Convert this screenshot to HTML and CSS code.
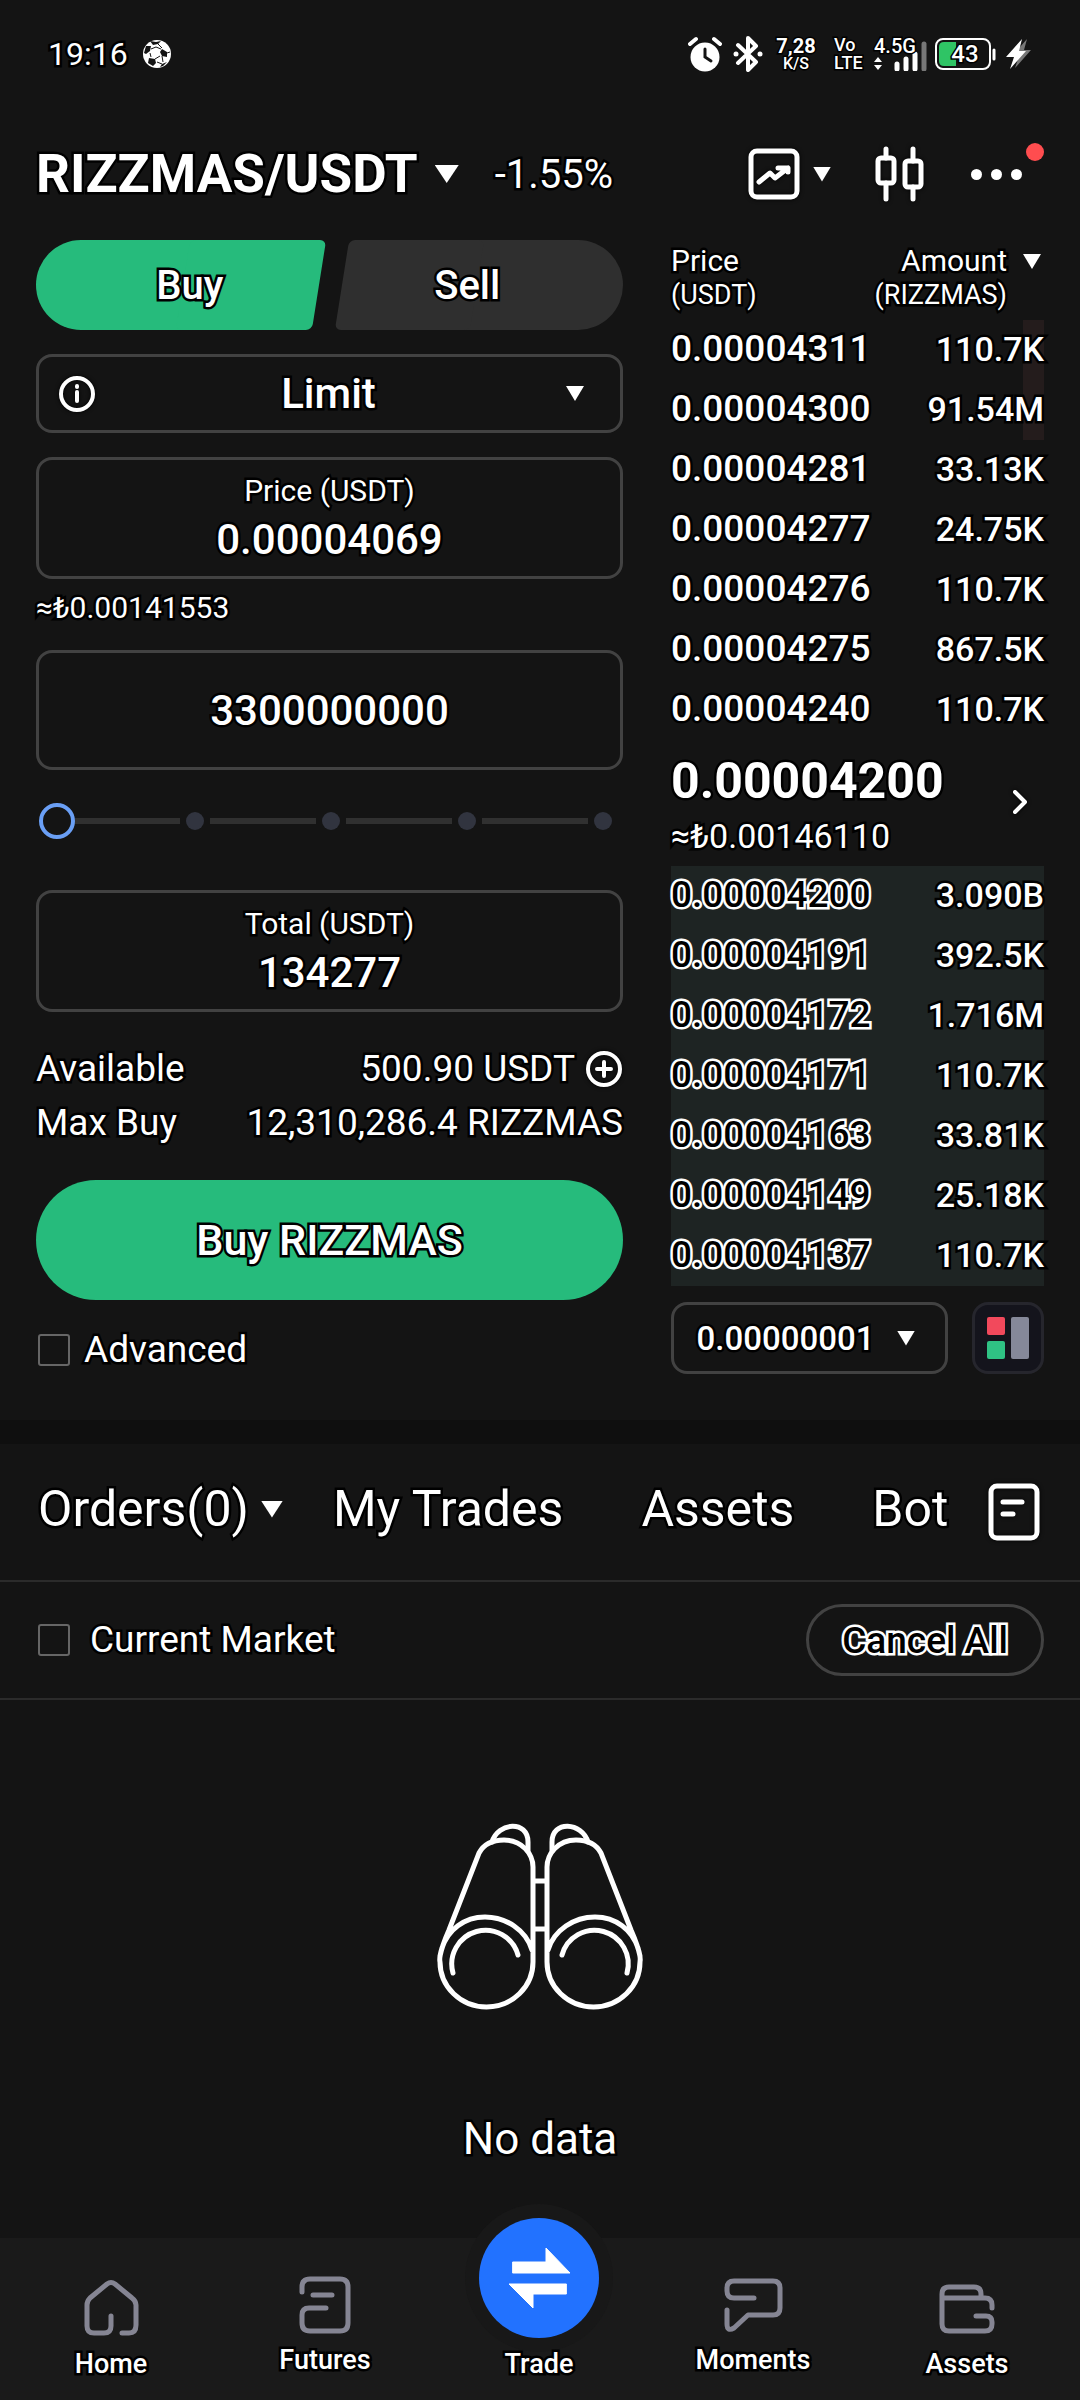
FILE: index.html
```html
<!DOCTYPE html>
<html lang="en">
<head>
<meta charset="utf-8">
<meta name="viewport" content="width=device-width, initial-scale=1">
<title>RIZZMAS/USDT</title>
<link rel="stylesheet" href="styles.css">
</head>
<body>
<div class="app">
  <div class="status">
    <span class="status-time">19:16</span>
    <svg class="ball" viewBox="0 0 28 28" aria-hidden="true">
      <circle cx="14" cy="14" r="14" fill="#fff"/>
      <path d="M7 1l6 1 5-1-3 3-5 1zM19 9l5 3 0 5-5-1-2-4zM3 6l5 0-1 5-4 3-2-1zM6 18l6 1 1 4-3 3-5-3zM19 24l5-2-4 4-3 1z" fill="#141414"/>
      <path d="M8 9l5-2 5 2M7 13l1 4M12 19l5-3M19 16l1 6M14 22l5 2M15 4l4 4M24 13l3-1" stroke="#141414" fill="none"/>
    </svg>
    <div class="status-icons">
      <svg class="alarm" viewBox="0 0 34 36" aria-hidden="true">
        <circle cx="17" cy="21" r="14.500" fill="#fff"/>
        <path d="M2 8l6-5M32 8l-6-5" stroke="#fff" stroke-width="4" stroke-linecap="round"/>
        <path d="M17 13v8l6 4" stroke="#141414" stroke-width="3" fill="none" stroke-linecap="round"/>
      </svg>
      <svg class="bluetooth" viewBox="0 0 36 36" aria-hidden="true">
        <path d="M8 9l18 17-8 8V2l8 8L8 27" fill="none" stroke="#fff" stroke-width="4" stroke-linejoin="round" stroke-linecap="round"/>
        <circle cx="6" cy="18" r="2.500" fill="#fff"/><circle cx="30" cy="18" r="2.500" fill="#fff"/>
      </svg>
      <div class="speed"><b>7,28</b><small>K/S</small></div>
      <div class="volte"><span>Vo</span><span>LTE</span></div>
      <div class="signal">
        <svg viewBox="0 0 54 34" aria-hidden="true">
          <path d="M0 25l4-5 4 5zM0 28l4 5 4-5z" fill="#fff"/>
          <path d="M23 27v5M32 22v10M41 17v15" stroke="#fff" stroke-width="5" stroke-linecap="round"/>
          <path d="M50 7v25" stroke="#777" stroke-width="5" stroke-linecap="round"/>
        </svg>
        <span>4.5G</span>
      </div>
      <div class="battery">
        <svg viewBox="0 0 62 34" aria-hidden="true">
          <path d="M10 5h12v24H10q-5 0-5-5V10q0-5 5-5z" fill="#2fc465"/>
          <rect x="2" y="2" width="54" height="30" rx="7" fill="none" stroke="#fff" stroke-width="2"/>
          <path d="M60 13v9" stroke="#fff" stroke-width="3" stroke-linecap="round"/>
        </svg>
        <span>43</span>
      </div>
      <svg class="bolt" viewBox="0 0 28 34" aria-hidden="true">
        <path d="M23 2L8 19h7l-4 12 16-18h-7z" fill="#777"/>
        <path d="M18 2L2 20h8L6 32l16-18h-7z" fill="#fff"/>
      </svg>
    </div>
  </div>

  <header class="header">
    <button class="pair" type="button"><h1>RIZZMAS/USDT</h1><i class="caret caret-lg"></i></button>
    <span class="change">-1.55%</span>
    <div class="tools">
      <button class="tool tool-chart" type="button" aria-label="Chart type">
        <svg class="icon" width="52" height="52" viewBox="0 0 52 52" aria-hidden="true">
          <rect x="3" y="3" width="46" height="46" rx="6"/>
          <path d="M11 34l11-9 5 5 13-10M30 20h10v4"/>
        </svg>
        <i class="caret"></i>
      </button>
      <button class="tool" type="button" aria-label="Candles">
        <svg class="icon" width="50" height="56" viewBox="0 0 50 56" aria-hidden="true">
          <rect x="4" y="12" width="16" height="25" rx="3"/><path d="M12 3v9M12 37v16"/>
          <rect x="31" y="15" width="16" height="26" rx="3"/><path d="M39 3v12M39 41v12"/>
        </svg>
      </button>
      <button class="tool more" type="button" aria-label="More"><i></i><i></i><i></i><b class="badge"></b></button>
    </div>
  </header>

  <main class="trade">
    <form class="form">
      <div class="sides">
        <button class="side side-buy" type="button">Buy</button>
        <button class="side side-sell" type="button">Sell</button>
      </div>
      <div class="box box-select">
        <svg class="icon icon-thin" width="40" height="40" viewBox="0 0 40 40" aria-hidden="true"><circle cx="20" cy="20" r="16"/><path d="M20 18v9"/><path d="M20 12v1"/></svg>
        <select aria-label="Order type"><option>Limit</option></select>
        <i class="caret"></i>
      </div>
      <div class="box box-field">
        <label for="price">Price (USDT)</label>
        <input id="price" type="text" value="0.00004069">
      </div>
      <p class="approx">≈₺0.00141553</p>
      <div class="box box-amount"><input type="text" aria-label="Amount" value="3300000000"></div>
      <div class="slider">
        <div class="stops"><i></i><b></b><i></i><b></b><i></i><b></b><i></i><b></b></div>
        <input type="range" min="0" max="100" value="0" aria-label="Percent of balance">
      </div>
      <div class="box box-field">
        <label for="total">Total (USDT)</label>
        <input id="total" type="text" value="134277">
      </div>
      <dl class="balance">
        <div><dt>Available</dt><dd>500.90 USDT
          <button class="plus" type="button" aria-label="Deposit"><svg class="icon icon-thin" width="38" height="38" viewBox="0 0 38 38" aria-hidden="true"><circle cx="19" cy="19" r="16"/><path d="M19 12v14M12 19h14"/></svg></button></dd></div>
        <div><dt>Max Buy</dt><dd>12,310,286.4 RIZZMAS</dd></div>
      </dl>
      <button class="submit" type="submit">Buy RIZZMAS</button>
      <label class="check"><input type="checkbox">Advanced</label>
    </form>

    <section class="book">
      <table>
        <thead>
          <tr><th>Price<br><small>(USDT)</small></th><th><div class="amount-head"><span>Amount<br><small>(RIZZMAS)</small></span><i class="caret"></i></div></th></tr>
        </thead>
        <tbody class="asks">
          <tr class="depth"><td>0.00004311</td><td>110.7K</td></tr>
          <tr class="depth"><td>0.00004300</td><td>91.54M</td></tr>
          <tr><td>0.00004281</td><td>33.13K</td></tr>
          <tr><td>0.00004277</td><td>24.75K</td></tr>
          <tr><td>0.00004276</td><td>110.7K</td></tr>
          <tr><td>0.00004275</td><td>867.5K</td></tr>
          <tr><td>0.00004240</td><td>110.7K</td></tr>
        </tbody>
        <tbody>
          <tr><td colspan="2" class="last">
            <button class="last-price" type="button">
              <span class="last-values"><strong>0.00004200</strong><span class="last-fiat">≈₺0.00146110</span></span>
              <svg class="icon icon-thin" width="24" height="32" viewBox="0 0 24 32" aria-hidden="true"><path d="M7 6l10 10-10 10"/></svg>
            </button>
          </td></tr>
        </tbody>
        <tbody class="bids">
          <tr><td>0.00004200</td><td>3.090B</td></tr>
          <tr><td>0.00004191</td><td>392.5K</td></tr>
          <tr><td>0.00004172</td><td>1.716M</td></tr>
          <tr><td>0.00004171</td><td>110.7K</td></tr>
          <tr><td>0.00004163</td><td>33.81K</td></tr>
          <tr><td>0.00004149</td><td>25.18K</td></tr>
          <tr><td>0.00004137</td><td>110.7K</td></tr>
        </tbody>
      </table>
      <div class="book-tools">
        <div class="box box-step">
          <select aria-label="Price step"><option>0.00000001</option></select>
          <i class="caret"></i>
        </div>
        <button class="view" type="button" aria-label="Book layout">
          <svg width="42" height="42" viewBox="0 0 42 42" aria-hidden="true">
            <rect width="18" height="18" rx="2" fill="#f2495c"/><rect y="24" width="18" height="18" rx="2" fill="#2fc284"/><rect x="24" width="18" height="42" rx="2" fill="#858899"/>
          </svg>
        </button>
      </div>
    </section>
  </main>

  <section class="orders">
    <nav class="tabs">
      <button class="tab tab-orders" type="button">Orders(0)<i class="caret"></i></button>
      <div class="tab-group">
        <button class="tab" type="button">My Trades</button>
        <button class="tab" type="button">Assets</button>
        <button class="tab" type="button">Bot</button>
      </div>
      <button class="tool history" type="button" aria-label="Order history">
        <svg class="icon" width="52" height="58" viewBox="0 0 52 58" aria-hidden="true"><rect x="3" y="3" width="46" height="52" rx="6"/><path d="M15 19h19M15 31h10"/></svg>
      </button>
    </nav>
    <div class="filter">
      <label class="check check-market"><input type="checkbox">Current Market</label>
      <button class="cancel" type="button">Cancel All</button>
    </div>
    <div class="empty">
      <svg width="212" height="190" viewBox="0 0 212 190" fill="none" stroke="#fff" stroke-width="5" stroke-linecap="round" aria-hidden="true">
        <g id="barrel">
          <path d="M6 136Q8 126 15 110L45 33Q52 20 70 20C88 20 99 34 99 47V142A46.500 45 0 0 1 6 142Q5 138 8 128C14 110 30 97 51 97C72 97 92 110 98 130"/>
          <path d="M58 22C64 2 94 0 94 22V31"/>
          <path d="M19 153A33 33 0 1 1 84 135"/>
        </g>
        <use href="#barrel" transform="translate(212 0) scale(-1 1)"/>
        <path d="M101 61h10M101 109h10"/>
      </svg>
      <p>No data</p>
    </div>
  </section>

  <nav class="bottom">
    <a href="#home"><svg width="60" height="60" viewBox="0 0 60 60" aria-hidden="true"><path d="M30 38v10q0 7-7 7H13q-7 0-7-7V27q0-4 3-7L26 6q4-3 8 0l17 14q4 3 4 7v20q0 8-7 8h-7"/></svg>Home</a>
    <a href="#futures" class="raised"><svg width="60" height="60" viewBox="0 0 60 60" aria-hidden="true"><path d="M7 18v-5q0-8 8-8h30q8 0 8 8v36q0 8-8 8H15q-8 0-8-8V41q0-7 7-7h17M18 21h19"/></svg>Futures</a>
    <a href="#trade" class="current"><svg width="120" height="120" viewBox="0 0 120 120" aria-hidden="true"><path d="M34 44h33V30l24 25H34zM87 76H54v14L30 66h57z"/></svg>Trade</a>
    <a href="#moments" class="raised"><svg width="60" height="60" viewBox="0 0 60 60" aria-hidden="true"><path d="M31 24H11q-7 0-7-7v-3q0-7 7-7h39q7 0 7 7v20q0 7-7 7H25L11 54q-7 4-7-4V36"/></svg>Moments</a>
    <a href="#assets"><svg width="60" height="60" viewBox="0 0 60 60" aria-hidden="true"><path d="M5 20v-4q0-7 7-7h25q7 0 7 7v4M5 18v28q0 7 7 7h36q7 0 7-7v-2q0-6-6-6H39M5 20h43q7 0 7 7v3"/></svg>Assets</a>
  </nav>
</div>
</body>
</html>
```

FILE: styles.css
```css
* { box-sizing: border-box; }

body {
  margin: 0;
  background: #141414;
  color: #fff;
  font-family: Roboto, "Noto Sans", sans-serif;
  font-size: 37px;
  -webkit-text-stroke: 5px #000;
  paint-order: stroke fill;
}

button, input, select {
  margin: 0;
  padding: 0;
  border: 0;
  background: none;
  color: inherit;
  font: inherit;
  -webkit-text-stroke: inherit;
  paint-order: inherit;
  appearance: none;
}

h1, p, dl, dd { margin: 0; font-size: inherit; }

.app {
  display: flex;
  flex-direction: column;
  min-height: 100vh;
}

.caret {
  flex: none;
  width: 18px;
  height: 15px;
  background: #fff;
  clip-path: polygon(0 0, 100% 0, 50% 100%);
}

.caret-lg { width: 24px; height: 18px; }

.icon {
  display: block;
  flex: none;
  fill: none;
  stroke: #fff;
  stroke-width: 5;
  stroke-linecap: round;
  stroke-linejoin: round;
  filter: drop-shadow(0 0 2px #000);
}

.icon-thin { stroke-width: 4; }

/* Phone status bar */
.status {
  display: flex;
  align-items: center;
  height: 108px;
  padding: 0 48px;
}

.status-time { font-size: 32px; }
.ball { width: 28px; height: 28px; margin-left: 15px; }

.status-icons {
  display: flex;
  align-items: center;
  gap: 8px;
  margin-left: auto;
  font-size: 18px;
  font-weight: 500;
  line-height: 18px;
  -webkit-text-stroke-width: 3px;
}

.alarm { width: 34px; height: 36px; }
.bluetooth { width: 36px; height: 36px; }
.bolt { width: 28px; height: 34px; }

.speed {
  display: flex;
  flex-direction: column;
  align-items: center;
  width: 52px;
  padding-right: 8px;
}

.speed b { font-size: 20px; line-height: 20px; }
.speed small { font-size: 16px; line-height: 16px; }
.volte { display: flex; flex-direction: column; width: 32px; }
.signal, .battery { display: grid; }
.signal > *, .battery > * { grid-area: 1 / 1; }
.signal { width: 52px; font-size: 20px; }
.signal svg { width: 54px; height: 34px; }
.battery { width: 62px; font-size: 24px; place-items: center; }
.battery svg { width: 62px; height: 34px; }

/* Pair header */
.header {
  display: flex;
  align-items: center;
  height: 132px;
  padding: 0 36px;
}

.pair { display: flex; align-items: center; gap: 17px; }
.pair h1 { font-size: 53px; font-weight: 700; }
.change { margin-left: 36px; font-size: 40px; }
.tools { display: flex; align-items: center; gap: 43px; margin-left: auto; }
.tool { display: flex; align-items: center; }
.tool-chart { gap: 13px; }

.more {
  position: relative;
  gap: 9px;
  padding: 20px 22px 20px 4px;
}

.more i {
  width: 11px;
  height: 11px;
  border-radius: 50%;
  background: #fff;
}

.badge {
  position: absolute;
  top: -6px;
  right: 0;
  width: 18px;
  height: 18px;
  border-radius: 50%;
  background: #ff4d4f;
}

/* Order form and order book */
.trade {
  display: grid;
  grid-template-columns: minmax(0, 587fr) minmax(0, 373fr);
  gap: 48px;
  padding: 0 36px 46px;
  border-bottom: 24px solid #0f0f0f;
}

.form { display: flex; flex-direction: column; }

.sides { display: grid; grid-template-columns: 1fr 1fr; }

.side {
  position: relative;
  isolation: isolate;
  height: 90px;
  font-size: 40px;
  font-weight: 500;
}

.side::before, .side::after {
  content: "";
  position: absolute;
  top: 0;
  bottom: 0;
  z-index: -1;
}

.side-buy { padding-left: 14px; }
.side-buy::before { left: 0; right: 30%; border-radius: 45px 0 0 45px; background: #26bb7c; }
.side-buy::after { left: 50%; right: 11px; border-radius: 6px; background: #26bb7c; transform: skewX(-9deg); }
.side-sell { padding-right: 18px; }
.side-sell::before { left: 30%; right: 0; border-radius: 0 45px 45px 0; background: #2f2f2f; }
.side-sell::after { left: 12px; right: 50%; border-radius: 6px; background: #2f2f2f; transform: skewX(-9deg); }

.box {
  border: 3px solid #424242;
  border-radius: 16px;
}

.box input, .box select {
  flex: 1;
  min-width: 0;
  width: 100%;
  text-align: center;
  text-align-last: center;
  font-size: 42px;
  font-weight: 500;
}

.box-select {
  display: flex;
  align-items: center;
  height: 79px;
  margin: 24px 0;
  padding: 0 36px 0 18px;
}

.box-select select { padding-right: 6px; }

.box-field {
  display: flex;
  flex-direction: column;
  padding: 13px 24px 7px;
}

.box-field label {
  font-size: 30px;
  line-height: 36px;
  text-align: center;
}

.box-field input { flex: none; height: 60px; }

.approx {
  margin-bottom: 13px;
  font-size: 30px;
  line-height: 58px;
}

.box-amount { display: flex; height: 120px; }

.slider {
  position: relative;
  margin: 33px 0 51px;
  height: 36px;
}

.stops {
  display: flex;
  align-items: center;
  height: 36px;
  padding: 0 11px 0 32px;
}

.stops i { flex: 1; height: 6px; margin: 0 6px; background: #303030; }
.stops b { width: 18px; height: 18px; border-radius: 50%; background: #31343f; }

.slider input {
  position: absolute;
  inset: 0;
  width: 100%;
  padding-left: 3px;
}

.slider input::-webkit-slider-thumb {
  appearance: none;
  width: 36px;
  height: 36px;
  border: 4px solid #6a9ff5;
  border-radius: 50%;
  background: #141414;
}

.balance { margin: 30px 0; }

.balance div {
  display: flex;
  justify-content: space-between;
  align-items: center;
  line-height: 54px;
}

.balance dd { display: flex; align-items: center; gap: 10px; }

.submit {
  height: 120px;
  border-radius: 60px;
  background: #26bb7c;
  font-size: 43px;
  font-weight: 500;
}

.check {
  display: flex;
  align-items: center;
  gap: 14px;
  margin-top: 26px;
  padding-left: 2px;
  line-height: 48px;
}

.check input {
  width: 32px;
  height: 32px;
  border: 2px solid #666;
  border-radius: 3px;
}

.book table {
  width: 100%;
  border-collapse: collapse;
}

.book th {
  padding: 4px 0 8px;
  font-size: 30px;
  font-weight: 400;
  line-height: 33px;
  text-align: left;
}

.book th small { font-size: 27px; }

.amount-head {
  display: flex;
  justify-content: flex-end;
  gap: 16px;
  padding-right: 3px;
  text-align: right;
}

.amount-head .caret { margin-top: 10px; }

.book td { height: 60px; padding: 0 0 2px; font-weight: 500; line-height: 56px; }
.book td:last-child { text-align: right; font-size: 34px; }
.depth { background: linear-gradient(#241c1c, #241c1c) right / 21px 100% no-repeat; }
.bids { background: #1e2423; }
.bids td:first-child { color: #000; -webkit-text-stroke-color: #fff; }
.book .last { height: 126px; line-height: 1; text-align: left; }

.last-price {
  display: flex;
  justify-content: space-between;
  align-items: center;
  width: 100%;
  padding-right: 12px;
  text-align: left;
}

.last-values { padding-top: 10px; }
.last-price strong { display: block; font-size: 50px; font-weight: 700; line-height: 58px; }
.last-fiat { font-size: 34px; font-weight: 400; line-height: 52px; }

.book-tools {
  display: flex;
  gap: 24px;
  margin-top: 16px;
}

.box-step {
  display: flex;
  flex: 1;
  align-items: center;
  min-width: 0;
  height: 72px;
  padding-right: 30px;
}

.box-step select { font-size: 33px; }

.view {
  display: grid;
  place-items: center;
  width: 72px;
  height: 72px;
  border: 3px solid #26262d;
  border-radius: 16px;
  background: #14141c;
}

/* Orders panel */
.orders { flex: 1; }

.tabs {
  display: flex;
  align-items: center;
  height: 138px;
  padding: 0 40px 0 38px;
  border-bottom: 2px solid #2b2b2b;
}

.tab { padding-bottom: 6px; font-size: 50px; line-height: 56px; }
.tab-orders { display: flex; align-items: center; gap: 12px; }
.tab-orders .caret { width: 22px; height: 17px; }
.tab-group { display: flex; gap: 78px; margin-left: 50px; }
.history { margin-left: auto; }

.filter {
  display: flex;
  justify-content: space-between;
  align-items: center;
  height: 118px;
  padding: 0 36px;
  border-bottom: 2px solid #2b2b2b;
}

.check-market { gap: 20px; margin-top: 0; }

.cancel {
  height: 72px;
  padding: 0 33px;
  border: 3px solid #424242;
  border-radius: 36px;
  color: #000;
  font-weight: 500;
  -webkit-text-stroke-color: #fff;
}

.empty {
  display: flex;
  flex-direction: column;
  align-items: center;
  gap: 101px;
  padding: 120px 0 70px;
}

.empty p { font-size: 44px; line-height: 56px; }

/* Bottom navigation: the trade button rises above the bar */
.bottom {
  display: grid;
  grid-template: 162px / repeat(5, 1fr);
  padding: 0 6px 0 4px;
  background: #1a1a1a;
}

.bottom a {
  display: flex;
  flex-direction: column;
  align-items: center;
  justify-content: flex-end;
  gap: 10px;
  min-height: 0;
  padding-bottom: 20px;
  color: #fff;
  font-size: 27px;
  font-weight: 500;
  line-height: 32px;
  text-decoration: none;
}

.bottom .raised { padding-bottom: 24px; }

.bottom svg {
  flex: none;
  fill: none;
  stroke: #858593;
  stroke-width: 5;
  stroke-linecap: round;
  stroke-linejoin: round;
}

.bottom .current svg {
  border-radius: 50%;
  background: #2272ff;
  box-shadow: 0 0 0 14px #181818;
  fill: #fff;
  stroke: #fff;
  stroke-width: 1;
}
```
